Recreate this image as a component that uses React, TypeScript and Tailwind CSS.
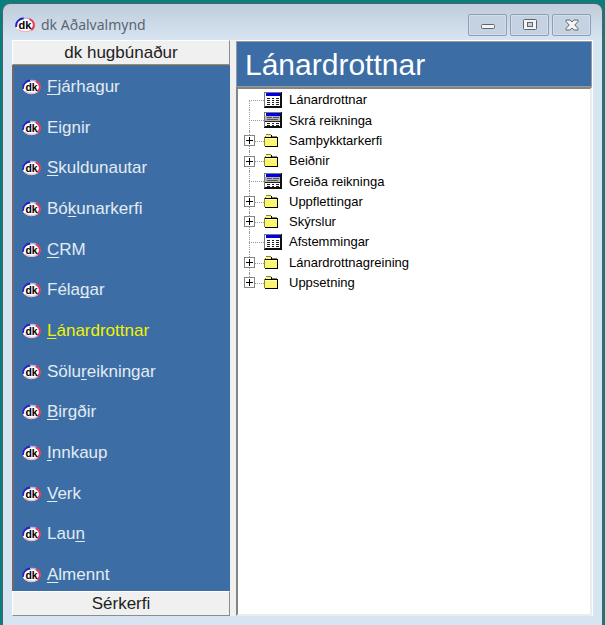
import { useState } from 'react'
import clsx from 'clsx'

type NodeKind = 'table' | 'form' | 'folder'

interface TreeNode {
  label: string
  kind: NodeKind
}

// `key` is the index of the underlined access letter
const modules = [
  { label: 'Fjárhagur', key: 0 },
  { label: 'Eignir', key: -1 },
  { label: 'Skuldunautar', key: 0 },
  { label: 'Bókunarkerfi', key: 2 },
  { label: 'CRM', key: 0 },
  { label: 'Félagar', key: 4 },
  { label: 'Lánardrottnar', key: 0 },
  { label: 'Sölureikningar', key: 4 },
  { label: 'Birgðir', key: 0 },
  { label: 'Innkaup', key: 0 },
  { label: 'Verk', key: 0 },
  { label: 'Laun', key: 3 },
  { label: 'Almennt', key: 0 },
]

const nodes: TreeNode[] = [
  { label: 'Lánardrottnar', kind: 'table' },
  { label: 'Skrá reikninga', kind: 'form' },
  { label: 'Samþykktarkerfi', kind: 'folder' },
  { label: 'Beiðnir', kind: 'folder' },
  { label: 'Greiða reikninga', kind: 'form' },
  { label: 'Uppflettingar', kind: 'folder' },
  { label: 'Skýrslur', kind: 'folder' },
  { label: 'Afstemmingar', kind: 'table' },
  { label: 'Lánardrottnagreining', kind: 'folder' },
  { label: 'Uppsetning', kind: 'folder' },
]

function DkLogo({ className }: { className?: string }) {
  return (
    <svg viewBox="0 0 20 16" className={className} aria-hidden="true">
      <ellipse cx="10" cy="8" rx="9.500" ry="7.500" fill="#fff" />
      <path d="M1.300 10C.5 5 4 1.500 9 1.200" fill="none" stroke="#2222c0" strokeWidth="2" />
      <path d="M8.500 1.200C12 .8 14 1.500 15.500 2.400" fill="none" stroke="#b9b0e0" strokeWidth="1.500" />
      <path d="M14.500 2.200C19.800 4.500 20.300 10 16 13.200" fill="none" stroke="#f03a50" strokeWidth="2" />
      <path d="M16.500 13C13 15.300 7 15.500 3 12.500" fill="none" stroke="#e8b4c0" strokeWidth="1.300" />
      <text x="10" y="12" textAnchor="middle" fontSize="11" fontWeight="700" fontFamily="Liberation Sans, sans-serif" fill="#000">
        dk
      </text>
    </svg>
  )
}

function NodeIcon({ kind }: { kind: NodeKind }) {
  if (kind === 'folder') {
    return (
      <svg viewBox="0 0 18 16" className="h-4 w-[18px]" shapeRendering="crispEdges" aria-hidden="true">
        <path d="M2 2h6v2h6v10H1V4h1z" fill="#000" />
        <path d="M0 4h1v9H0zM1 3h1v1H1zM2 1h5v1H2zM8 3h5v1H8z" fill="#84843a" />
        <path d="M2 2h5v2H2zM1 5h12v8H1z" fill="#fbf66c" />
        <path d="M1 5h12v1H1z" fill="#fffde0" />
      </svg>
    )
  }
  return (
    <svg viewBox="0 0 18 16" className="h-4 w-[18px]" shapeRendering="crispEdges" aria-hidden="true">
      <path d="M0 0h18v16H0z" fill="#111" />
      <path d="M0 0h17v1H0zM0 0h1v15H0z" fill="#777" />
      <path d="M1 1h15v13H1z" fill="#fff" />
      <path d="M2 1h14v3H2z" fill="#0000e6" />
      {kind === 'table' ? (
        <path
          d="M3 6h3v1H3zM8 6h2v1H8zM12 6h3v1h-3zM3 8h3v1H3zM8 8h2v1H8zM12 8h3v1h-3zM3 10h3v1H3zM8 10h2v1H8zM12 10h3v1h-3zM3 12h3v1H3zM8 12h2v1H8zM12 12h3v1h-3z"
          fill="#222"
        />
      ) : (
        <>
          <path d="M1 4h15v6H1z" fill="#b4b4b4" />
          <path d="M3 5h5v1H3zM9 5h6v1H9zM3 7h11v1H3z" fill="#555" />
          <path d="M1 9h15v1H1z" fill="#222" />
          <path d="M3 11h3v1H3zM8 11h2v1H8zM12 11h3v1h-3zM3 13h3v1H3zM8 13h2v1H8zM12 13h3v1h-3z" fill="#222" />
        </>
      )}
    </svg>
  )
}

function AccessLabel({ label, at }: { label: string; at: number }) {
  if (at < 0) return <span>{label}</span>
  return (
    <span>
      {label.slice(0, at)}
      <u className="underline-offset-2 [text-decoration-skip-ink:none]">{label[at]}</u>
      {label.slice(at + 1)}
    </span>
  )
}

function CaptionButton({ label, children }: { label: string; children: React.ReactNode }) {
  return (
    <button
      aria-label={label}
      className="flex h-[22px] w-[39px] items-center justify-center rounded-[2px] border border-[#8f9db5] bg-[#c5d2e1] shadow-[inset_0_0_0_1px_#d3deea]"
    >
      <svg viewBox="0 0 16 14" className="h-3.5 w-4" aria-hidden="true">
        {children}
      </svg>
    </button>
  )
}

function TitleBar() {
  return (
    <header className="flex h-9 items-center bg-linear-to-b from-[#bfcddb] to-[#d7e4f2] pt-1.5 pr-0.5 pl-[3px]">
      <DkLogo className="h-4 w-5" />
      <h1 className="ml-1.5 flex-1 font-['Noto_Sans',sans-serif] text-sm text-[#5c6570]">dk Aðalvalmynd</h1>
      <div className="flex gap-[3px]">
        <CaptionButton label="Minimize">
          <rect x="1.500" y="6.500" width="13" height="4" rx="1" fill="#f4f4f4" stroke="#5e6470" />
        </CaptionButton>
        <CaptionButton label="Maximize">
          <rect x="1.500" y="1.500" width="13" height="10" rx="1" fill="#f4f4f4" stroke="#5e6470" />
          <rect x="5.500" y="4.500" width="5" height="4" fill="#c5d2e1" stroke="#5e6470" />
        </CaptionButton>
        <CaptionButton label="Close">
          <path
            d="M2 2h4l2 2 2-2h4v1.500L10.800 7 14 10.500V12h-4L8 10l-2 2H2v-1.500L5.200 7 2 3.500z"
            fill="#f4f4f4"
            stroke="#5e6470"
          />
        </CaptionButton>
      </div>
    </header>
  )
}

function GroupButton({ children }: { children: React.ReactNode }) {
  return (
    <button className="h-[25px] w-full shrink-0 border border-t-white border-r-[#8c8c8c] border-b-[#8c8c8c] border-l-white bg-[#f0f0f0] text-[17px] leading-5 text-[#222]">
      {children}
    </button>
  )
}

export default function App() {
  const [active, setActive] = useState('Lánardrottnar')

  return (
    <div className="flex min-h-screen flex-col bg-[#087f7c] px-0.5 pt-[3px] font-['Liberation_Sans',Arial,sans-serif]">
      <div className="flex flex-1 flex-col overflow-hidden rounded-t-lg border-x border-t border-[#56606a] bg-linear-to-b from-[#bfcddb] to-[#d7e4f2] to-[36px] px-[9px] pb-[9px]">
        <TitleBar />

        <div className="flex flex-1 gap-1.5 bg-[#f0f0f0]">
          <aside className="flex w-[218px] shrink-0 flex-col">
            <GroupButton>dk hugbúnaður</GroupButton>
            <nav className="flex flex-1 flex-col justify-between border-t border-l-2 border-[#6b6b6b] bg-[#3c6ea5] pt-[9px] pb-1 pl-2">
              {modules.map((m) => (
                <button
                  key={m.label}
                  onClick={() => setActive(m.label)}
                  className={clsx(
                    'flex h-6 items-center gap-1.5 text-left text-[17px] leading-6',
                    m.label === active ? 'text-[#f2f200]' : 'text-[#e3ebf3]'
                  )}
                >
                  <DkLogo className="h-4 w-[19px]" />
                  <AccessLabel label={m.label} at={m.key} />
                </button>
              ))}
            </nav>
            <GroupButton>Sérkerfi</GroupButton>
          </aside>

          <main className="flex min-w-0 flex-1 flex-col border-t border-r border-white">
            <h2 className="h-[46px] border border-[#9a9a9a] bg-[#3c6ea5] pl-2 text-[30px] leading-[46px] text-white">
              {active}
            </h2>
            <div className="flex-1 border-2 border-t-[#858585] border-r-[#ececec] border-b-[#ececec] border-l-[#858585] bg-white pt-px pl-1.5">
              <ul className="grid h-[203px] auto-rows-fr text-[13px] text-black">
                {nodes.map((node, i) => (
                  <li key={node.label} className="flex items-center">
                    <span className="relative flex h-full w-5 shrink-0 items-center">
                      <span
                        className={clsx(
                          'absolute left-[5px] border-l border-dotted border-[#999]',
                          i === 0 ? 'top-1/2 bottom-0' : i === nodes.length - 1 ? 'top-0 bottom-1/2' : 'inset-y-0'
                        )}
                      />
                      <span className="absolute top-1/2 right-0 left-[5px] border-t border-dotted border-[#999]" />
                      {node.kind === 'folder' && (
                        <button
                          aria-label={`Opna ${node.label}`}
                          className="relative flex size-[11px] items-center justify-center border border-[#858585] bg-white"
                        >
                          <svg viewBox="0 0 7 7" className="size-[7px]" shapeRendering="crispEdges" aria-hidden="true">
                            <path d="M3 0h1v7H3zM0 3h7v1H0z" fill="#000" />
                          </svg>
                        </button>
                      )}
                    </span>
                    <button className="flex items-center gap-[7px] whitespace-nowrap">
                      <NodeIcon kind={node.kind} />
                      {node.label}
                    </button>
                  </li>
                ))}
              </ul>
            </div>
          </main>
        </div>
      </div>
    </div>
  )
}
